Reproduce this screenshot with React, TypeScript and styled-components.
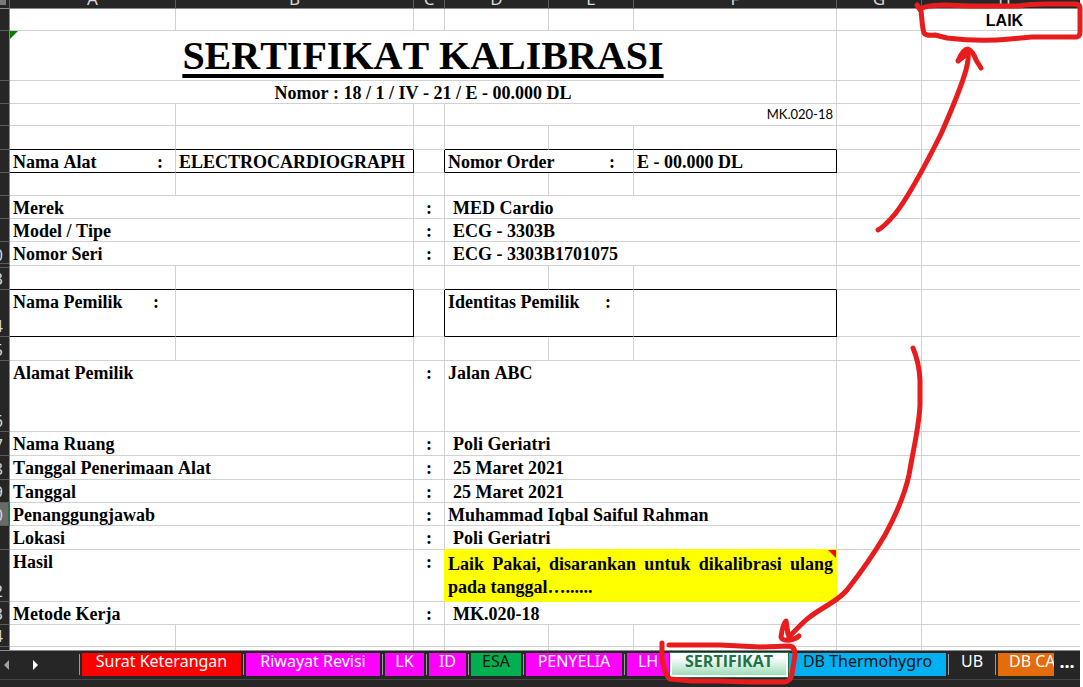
import React from "react";
import styled, { createGlobalStyle, css } from "styled-components";

const GRID = "#d2d2d2";
const INK = "#000000";
const YELLOW = "#ffff00";
const DARK = "#262626";
const HEAD_LINE = "#5c5c5c";

const GlobalStyle = createGlobalStyle`
  * { box-sizing: border-box; }
  body { margin: 0; background: #ffffff; }
`;

const Workbook = styled.main`
  position: relative;
  overflow: hidden;
  padding-right: 3px;
  background: #ffffff;
  color: ${INK};
  font: bold 18px/20px "Liberation Serif", "Times New Roman", serif;
  font-kerning: none;
`;

const SheetView = styled.div`
  height: 650px;
  overflow: hidden;
`;

const Sheet = styled.table`
  width: calc(100% + 8px);
  table-layout: fixed;
  border-collapse: separate;
  border-spacing: 0;
`;

const Col = styled.col<{ $w?: number }>`
  width: ${(p) => (p.$w ? `${p.$w}px` : "auto")};
`;

const Row = styled.tr<{ $h: number }>`
  height: ${(p) => p.$h}px;
`;

const headBase = css`
  padding: 0;
  overflow: hidden;
  background: ${DARK};
  color: #d8d8d8;
  font: 16px/20px "Noto Sans", "Open Sans", sans-serif;
  border-right: 1px solid ${HEAD_LINE};
`;

const ColumnHead = styled.th`
  ${headBase}
  border-bottom: 1px solid #8a8a8a;
`;

const ColumnLetter = styled.div`
  display: flex;
  align-items: flex-end;
  justify-content: center;
  height: 8px;
  overflow: hidden;
  font-size: 17px;
  line-height: 18px;
`;

const SelectAll = styled.div`
  width: 6px;
  height: 5px;
  margin-bottom: 3px;
  background: #7a7a7a;
`;

const RowHead = styled.th<{ $selected?: boolean; $gap?: "above" | "below" }>`
  ${headBase}
  border-right-color: #8a8a8a;
  border-bottom: 1px solid ${HEAD_LINE};
  vertical-align: bottom;
  ${(p) => p.$selected && css`
    background: #6a6a6a;
    border-right: 2px solid #217346;
  `}
  ${(p) => p.$gap === "below" && css`
    border-bottom-color: ${DARK};
    box-shadow: inset 0 -1px ${DARK}, inset 0 -2px ${HEAD_LINE};
  `}
  ${(p) => p.$gap === "above" && css`
    box-shadow: inset 0 1px ${DARK}, inset 0 2px ${HEAD_LINE};
  `}
`;

const RowNumber = styled.div`
  display: flex;
  justify-content: flex-end;
  width: 3px;
  height: 20px;
  overflow: hidden;
`;

type CellStyle = {
  $right?: string;
  $bottom?: string;
  $align?: "center" | "right" | "justify";
  $indent?: boolean;
};

const Cell = styled.td<CellStyle>`
  position: relative;
  padding: 2px 3px 0 ${(p) => (p.$indent ? 8 : 3)}px;
  vertical-align: top;
  white-space: nowrap;
  text-align: ${(p) => p.$align ?? "left"};
  border-right: 1px solid ${(p) => p.$right ?? GRID};
  border-bottom: 1px solid ${(p) => p.$bottom ?? GRID};
`;

const ResultCell = styled(Cell)`
  padding-top: 3px;
  background: ${YELLOW};
  line-height: 23px;
  white-space: normal;
`;

const Corner = styled.span<{ $side: "left" | "right" }>`
  position: absolute;
  top: 0;
  ${(p) => p.$side}: 0;
  width: 8px;
  height: 8px;
  background: ${(p) => (p.$side === "left" ? "#008000" : "#ff0000")};
  clip-path: ${(p) =>
    p.$side === "left" ? "polygon(0 0, 100% 0, 0 100%)" : "polygon(0 0, 100% 0, 100% 100%)"};
`;

const Title = styled.h1`
  margin: 0;
  font-size: 40px;
  line-height: 46px;
  text-decoration: underline;
  text-decoration-thickness: 4px;
  text-underline-offset: 5px;
  text-decoration-skip-ink: none;
`;

const Status = styled.span`
  display: block;
  font: bold 16px/19px "Liberation Sans", Arial, sans-serif;
`;

const MethodCode = styled.span`
  display: block;
  font: 13px/17px Lato, "Open Sans", sans-serif;
`;

const Labelled = styled.div<{ $end: number }>`
  display: flex;
  justify-content: space-between;
  padding-right: ${(p) => p.$end}px;
`;

const TabBar = styled.nav`
  display: flex;
  align-items: flex-start;
  height: 37px;
  padding-top: 2px;
  border-top: 1px solid #8a8a8a;
  background: linear-gradient(${DARK} 28px, #444444 28px, #444444 29px, ${DARK} 29px);
`;

const Arrows = styled.div`
  display: flex;
  flex: none;
  width: 77px;
  height: 23px;
`;

const ArrowButton = styled.button`
  display: flex;
  align-items: center;
  width: 29px;
  padding: 0 0 0 4px;
  border: 0;
  background: none;
`;

type TabKind = "red" | "pink" | "green" | "blue" | "plain" | "orange";

const tabFill: Record<TabKind, string> = {
  red: "#ff0000",
  pink: "#ff00ff",
  green: "#00b050",
  blue: "#00b0f0",
  plain: DARK,
  orange: "#e46c0a",
};

const Tab = styled.button<{ $kind: TabKind; $w: number }>`
  flex: none;
  width: ${(p) => p.$w}px;
  height: 23px;
  padding: 0 0 6px;
  overflow: hidden;
  border: 0;
  background: ${(p) => tabFill[p.$kind]};
  color: ${(p) => (p.$kind === "green" || p.$kind === "blue" ? "#101010" : "#ffffff")};
  font: 16px/17px "Noto Sans", "Open Sans", sans-serif;
  white-space: nowrap;
`;

const Divider = styled.span`
  flex: none;
  width: 1px;
  height: 21px;
  margin: 1px 2px;
  background: #9a9a9a;
`;

const ActiveTab = styled.button`
  flex: none;
  width: 118px;
  height: 24px;
  padding: 0 0 6px;
  border: 2px solid #ffffff;
  border-top: 0;
  outline: 1px solid #217346;
  margin: 0 1px;
  background: linear-gradient(#ffffff 20%, #9fdcb9);
  color: #217346;
  font: bold 16px/17px "Open Sans", "Noto Sans", sans-serif;
`;

const CutTab = styled(Tab)`
  padding-left: 11px;
  text-align: left;
`;

const More = styled.button`
  width: 27px;
  height: 23px;
  padding: 0 0 7px;
  border: 0;
  background: none;
  color: #ffffff;
  font: bold 18px/16px "Noto Sans", sans-serif;
`;

const Ink = styled.svg`
  position: absolute;
  top: 0;
  left: 0;
  pointer-events: none;
`;

const tailCells = (
  <>
    <Cell />
    <Cell />
  </>
);

function Head({ n, selected, gap }: { n: number; selected?: boolean; gap?: "above" | "below" }) {
  return (
    <RowHead scope="row" $selected={selected} $gap={gap}>
      {n > 9 && <RowNumber>{n}</RowNumber>}
    </RowHead>
  );
}

function BlankRow({ n, h, boxed, gap, mark }: { n: number; h: number; boxed?: boolean; gap?: "above"; mark?: boolean }) {
  const line = boxed ? INK : GRID;
  return (
    <Row $h={h}>
      <Head n={n} gap={gap} />
      <Cell $bottom={line} />
      <Cell $bottom={line} />
      <Cell />
      <Cell $bottom={line} />
      <Cell $bottom={line} />
      <Cell $bottom={line} />
      <Cell />
      {mark ? <Cell $align="center"><Status>LAIK</Status></Cell> : <Cell />}
    </Row>
  );
}

type BoxedProps = {
  n: number; h: number; left: string; leftValue?: string; right: string; rightValue?: string;
  leftEnd: number; rightEnd: number;
};

function BoxedRow({ n, h, left, leftValue, right, rightValue, leftEnd, rightEnd }: BoxedProps) {
  return (
    <Row $h={h}>
      <Head n={n} />
      <Cell $bottom={INK}>
        <Labelled $end={leftEnd}><span>{left}</span><span>:</span></Labelled>
      </Cell>
      <Cell $bottom={INK} $right={INK}>{leftValue}</Cell>
      <Cell $right={INK} />
      <Cell colSpan={2} $bottom={INK}>
        <Labelled $end={rightEnd}><span>{right}</span><span>:</span></Labelled>
      </Cell>
      <Cell $bottom={INK} $right={INK}>{rightValue}</Cell>
      {tailCells}
    </Row>
  );
}

type FieldProps = {
  n: number; h: number; label: string; value: string; flush?: boolean; selected?: boolean;
  gap?: "below"; beforeResult?: boolean;
};

function FieldRow({ n, h, label, value, flush, selected, gap, beforeResult }: FieldProps) {
  return (
    <Row $h={h}>
      <Head n={n} selected={selected} gap={gap} />
      <Cell colSpan={2}>{label}</Cell>
      <Cell $align="center">:</Cell>
      <Cell colSpan={3} $indent={!flush} $bottom={beforeResult ? YELLOW : GRID}>{value}</Cell>
      {tailCells}
    </Row>
  );
}

const columns: [string, number?][] = [
  ["A", 166], ["B", 238], ["C", 31], ["D", 104], ["E", 85], ["F", 203], ["G", 85], ["H"],
];

const leadingTabs: { name: string; kind: TabKind; w: number }[] = [
  { name: "Surat Keterangan", kind: "red", w: 159 },
  { name: "Riwayat Revisi", kind: "pink", w: 134 },
  { name: "LK", kind: "pink", w: 39 },
  { name: "ID", kind: "pink", w: 37 },
  { name: "ESA", kind: "green", w: 50 },
  { name: "PENYELIA", kind: "pink", w: 96 },
  { name: "LH", kind: "pink", w: 42 },
];

export default function App() {
  return (
    <>
      <GlobalStyle />
      <Workbook>
        <SheetView>
          <Sheet>
            <colgroup>
              <Col $w={10} />
              {columns.map(([name, w]) => <Col key={name} $w={w} />)}
            </colgroup>
            <thead>
              <Row $h={9}>
                <ColumnHead><SelectAll /></ColumnHead>
                {columns.map(([name]) => (
                  <ColumnHead key={name} scope="col"><ColumnLetter>{name}</ColumnLetter></ColumnHead>
                ))}
              </Row>
            </thead>
            <tbody>
              <BlankRow n={1} h={22} mark />
              <Row $h={50}>
                <Head n={2} />
                <Cell colSpan={6} $align="center"><Corner $side="left" /><Title>SERTIFIKAT KALIBRASI</Title></Cell>
                {tailCells}
              </Row>
              <Row $h={23}>
                <Head n={3} />
                <Cell colSpan={6} $align="center">Nomor : 18 / 1 / IV - 21 / E - 00.000 DL</Cell>
                {tailCells}
              </Row>
              <Row $h={22}>
                <Head n={4} />
                <Cell />
                <Cell />
                <Cell />
                <Cell colSpan={3} $align="right"><MethodCode>MK.020-18</MethodCode></Cell>
                {tailCells}
              </Row>
              <BlankRow n={5} h={24} boxed />
              <BoxedRow n={6} h={23} left="Nama Alat" leftValue="ELECTROCARDIOGRAPH" leftEnd={9}
                right="Nomor Order" rightValue="E - 00.000 DL" rightEnd={15} />
              <BlankRow n={7} h={23} />
              <FieldRow n={8} h={23} label="Merek" value="MED Cardio" />
              <FieldRow n={9} h={23} label="Model / Tipe" value="ECG - 3303B" />
              <FieldRow n={10} h={24} label="Nomor Seri" value="ECG - 3303B1701075" gap="below" />
              <BlankRow n={13} h={24} boxed gap="above" />
              <BoxedRow n={14} h={47} left="Nama Pemilik" leftEnd={13} right="Identitas Pemilik" rightEnd={19} />
              <BlankRow n={15} h={24} />
              <FieldRow n={16} h={71} label="Alamat Pemilik" value="Jalan ABC" flush />
              <FieldRow n={17} h={24} label="Nama Ruang" value="Poli Geriatri" />
              <FieldRow n={18} h={24} label="Tanggal Penerimaan Alat" value="25 Maret 2021" />
              <FieldRow n={19} h={23} label="Tanggal" value="25 Maret 2021" />
              <FieldRow n={20} h={23} label="Penanggungjawab" value="Muhammad Iqbal Saiful Rahman" flush selected />
              <FieldRow n={21} h={24} label="Lokasi" value="Poli Geriatri" beforeResult />
              <Row $h={52}>
                <Head n={22} />
                <Cell colSpan={2}>Hasil</Cell>
                <Cell $align="center" $right={YELLOW}>:</Cell>
                <ResultCell colSpan={3} $align="justify" $right={YELLOW} $bottom={YELLOW}>
                  <Corner $side="right" />
                  Laik Pakai, disarankan untuk dikalibrasi ulang pada tanggal…......
                </ResultCell>
                {tailCells}
              </Row>
              <FieldRow n={23} h={23} label="Metode Kerja" value="MK.020-18" />
              <BlankRow n={24} h={22} />
              <BlankRow n={25} h={22} />
            </tbody>
          </Sheet>
        </SheetView>
        <TabBar aria-label="Sheets">
          <Arrows>
            <ArrowButton aria-label="Previous sheets">
              <svg width="6" height="10"><path d="M5 0v10L0 5z" fill="#a0a0a0" /></svg>
            </ArrowButton>
            <ArrowButton aria-label="Next sheets">
              <svg width="6" height="10"><path d="M0 0v10l5-5z" fill="#ffffff" /></svg>
            </ArrowButton>
          </Arrows>
          {leadingTabs.map((t) => (
            <React.Fragment key={t.name}>
              <Divider />
              <Tab $kind={t.kind} $w={t.w}>{t.name}</Tab>
            </React.Fragment>
          ))}
          <ActiveTab aria-current="page">SERTIFIKAT</ActiveTab>
          <Tab $kind="blue" $w={157}>DB Thermohygro</Tab>
          <Divider />
          <Tab $kind="plain" $w={42}>UB</Tab>
          <Divider />
          <CutTab $kind="orange" $w={56}>DB CA</CutTab>
          <More aria-label="More sheets">...</More>
        </TabBar>
        <Ink width="1083" height="687" viewBox="0 0 1083 687" fill="none" stroke="#e81c1c" strokeWidth="5" strokeLinecap="round" strokeLinejoin="round" aria-hidden="true">
          <path d="M917 5L921 11C922 18 922 27 924 33Q926 36 935 35L947 38Q980 42 1010 39L1032 37H1077Q1080 36 1080 32V8Q1080 4 1075 4H1046Q1030 4 1018 6H970L945 5Q930 5 922 8" />
          <path d="M878 230Q884 227 895 214C910 195 925 166 941 134C952 109 962 84 966 70Q969 58 968 53L958 61Q963 49 968 49Q973 51 976 60L981 68" />
          <path d="M913 348Q919 362 920 380V405C919 427 914 446 909 475Q903 502 885 535C872 557 862 571 847 590Q841 597 828 605C808 617 805 620 789 637" />
          <path d="M788 634L786 621Q783 623 781 637Q782 641 790 640Q796 639 799 636" />
          <path d="M662 643V658Q665 676 670 679L692 681H718L750 682H785Q791 681 792 674L795 655Q795 646 789 646L760 647L740 646L720 645H669" />
        </Ink>
      </Workbook>
    </>
  );
}
